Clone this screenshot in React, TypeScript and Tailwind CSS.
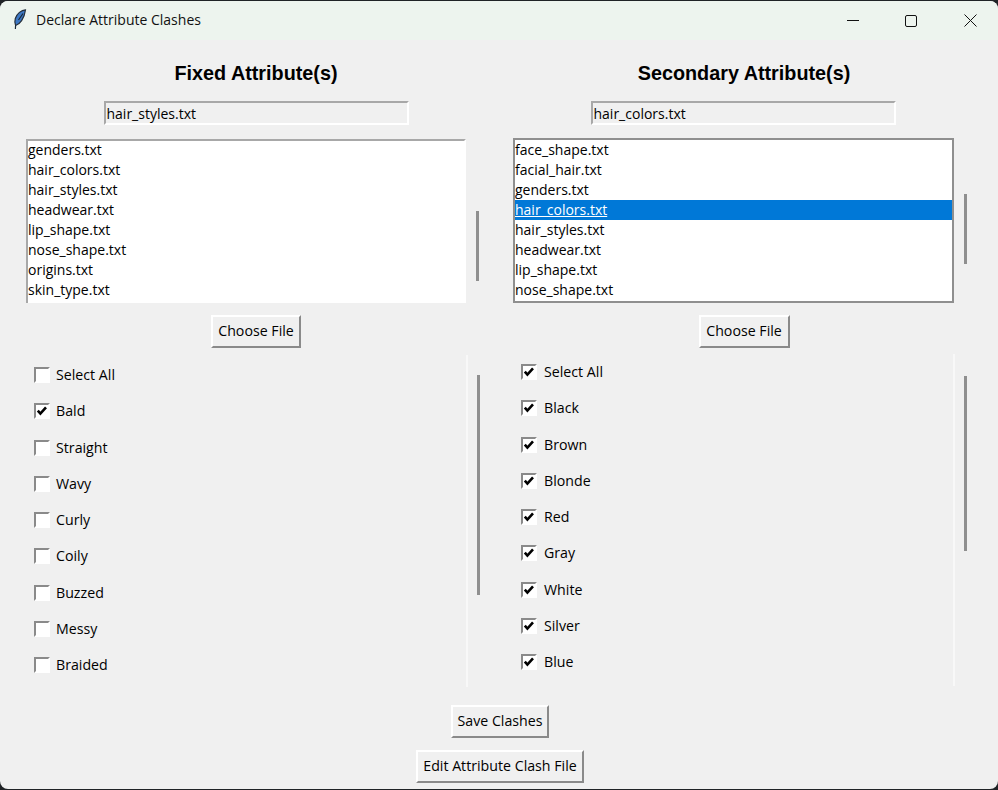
import React from "react";

const font = "[font-family:'Open_Sans','Noto_Sans',sans-serif]";

function Btn({ label, w }: { label: string; w: string }) {
  return (
    <div className={`${w} h-[33px] pb-[1px] flex items-center justify-center border-2 border-t-white border-l-white border-b-[#8a8a8a] border-r-[#8a8a8a] bg-[#f0f0f0] text-[14.2px] text-black leading-none`}>
      {label}
    </div>
  );
}

function Field({ value }: { value: string }) {
  return (
    <div className="w-[305px] h-[24px] flex items-center pl-[1px] pt-[2px] border-2 border-t-[#a8a8a8] border-l-[#a8a8a8] border-b-white border-r-white text-[14px] text-black leading-none">
      {value}
    </div>
  );
}

function Check({ label, checked, wide }: { label: string; checked: boolean; wide?: boolean }) {
  return (
    <div className="h-[36.25px] flex items-center">
      <span className="w-[16px] h-[16px] flex items-center justify-center bg-white border-2 border-t-[#8a8a8a] border-l-[#8a8a8a] border-b-white border-r-white">
        {checked && (
          <svg width="12" height="12" viewBox="0 0 12 12" fill="none">
            <path d="M1.8 5.6 L4.4 8.6 L10 2.4" stroke="#000" strokeWidth="2.6" />
          </svg>
        )}
      </span>
      <span className={`${wide ? "ml-[7px]" : "ml-[6px]"} text-[14.2px] text-black leading-none`}>{label}</span>
    </div>
  );
}

function Thumb({ cls }: { cls: string }) {
  return <div className={`w-[3px] bg-[#8f8f8f] ${cls}`} />;
}

function ListRow({ text, selected }: { text: string; selected?: boolean }) {
  return (
    <div className={`h-[20px] flex items-center text-[14px] leading-none ${selected ? "bg-[#0078d7] text-white underline" : "text-black"}`}>
      {text}
    </div>
  );
}

const leftFiles = ["genders.txt", "hair_colors.txt", "hair_styles.txt", "headwear.txt", "lip_shape.txt", "nose_shape.txt", "origins.txt", "skin_type.txt"];
const rightFiles = ["face_shape.txt", "facial_hair.txt", "genders.txt", "hair_colors.txt", "hair_styles.txt", "headwear.txt", "lip_shape.txt", "nose_shape.txt"];
const leftChecks: [string, boolean][] = [["Select All", false], ["Bald", true], ["Straight", false], ["Wavy", false], ["Curly", false], ["Coily", false], ["Buzzed", false], ["Messy", false], ["Braided", false]];
const rightChecks = ["Select All", "Black", "Brown", "Blonde", "Red", "Gray", "White", "Silver", "Blue"];

export default function App() {
  return (
    <div className={`w-[998px] h-[790px] bg-[#1f2326] overflow-hidden ${font}`}>
      <div className="h-[788px] mt-px rounded-t-[8px] rounded-b-[8px] overflow-hidden bg-[#f0f0f0] flex flex-col">
        {/* Title bar */}
        <div className="h-[39px] shrink-0 bg-[#edf4ee] flex items-center">
          <svg className="ml-[13px] mb-[2px]" width="14" height="21" viewBox="0 0 14 21">
            <path d="M12.5 0.8 C8.5 1 3.8 4.5 2.3 9.5 C1.6 12 1.8 14.5 2.6 16.5 C6.5 15.5 11.5 9.5 12.5 0.8 Z" fill="#3d78c4" stroke="#26303c" strokeWidth="1.2" />
            <path d="M10 4.5 L5.5 11 M2.6 16 L2.4 20" stroke="#182838" strokeWidth="1.2" fill="none" />
          </svg>
          <span className="ml-[9px] pb-[2px] text-[14px] text-[#111] leading-none">Declare Attribute Clashes</span>
          <div className="ml-auto flex items-center h-full">
            <div className="w-[58px] h-full flex items-center justify-center">
              <svg width="12" height="12" viewBox="0 0 12 12"><path d="M0 5.5 H12" stroke="#111" strokeWidth="1" /></svg>
            </div>
            <div className="w-[58px] h-full flex items-center justify-center">
              <svg width="12" height="12" viewBox="0 0 12 12" fill="none"><rect x="0.5" y="0.5" width="11" height="11" rx="1.5" stroke="#111" strokeWidth="1" /></svg>
            </div>
            <div className="w-[58px] h-full flex items-center justify-center">
              <svg className="ml-[2px]" width="13" height="13" viewBox="0 0 13 13" fill="none"><path d="M0.5 0.5 L12.5 12.5 M12.5 0.5 L0.5 12.5" stroke="#111" strokeWidth="1" /></svg>
            </div>
          </div>
        </div>

        {/* Columns */}
        <div className="flex">
          {/* Left */}
          <div className="w-[487px] pl-[26px] shrink-0">
            <div className="w-[460px] flex flex-col items-center">
              <div className="h-[61px] pt-[21px] text-[19.8px] font-bold leading-[24px] text-black [font-family:'Liberation_Sans',sans-serif]">Fixed Attribute(s)</div>
              <Field value="hair_styles.txt" />
            </div>
            <div className="mt-[14px] flex">
              <div className="w-[440px] h-[164px] bg-white border-t-2 border-l-2 border-t-[#a8a8a8] border-l-[#a8a8a8] border-r-2 border-r-white">
                <div className="-mt-px">
                  {leftFiles.map((f) => <ListRow key={f} text={f} />)}
                </div>
              </div>
              <Thumb cls="ml-[10px] mt-[72px] h-[70px]" />
            </div>
            <div className="mt-[12px] w-[460px] flex justify-center">
              <Btn label="Choose File" w="w-[90px]" />
            </div>
            <div className="mt-[7px] h-[332px] flex">
              <div className="w-[442px] border-r-2 border-r-[#f8f8f8] pl-[8px] pt-[2px]">
                {leftChecks.map(([l, c]) => <Check key={l} label={l} checked={c} />)}
              </div>
              <Thumb cls="ml-[9px] mt-[20px] h-[220px]" />
            </div>
          </div>
          {/* Right */}
          <div className="pl-[25px]">
            <div className="w-[464px] flex flex-col items-center">
              <div className="h-[61px] pt-[21px] text-[19.8px] font-bold leading-[24px] text-black [font-family:'Liberation_Sans',sans-serif]">Secondary Attribute(s)</div>
              <div className="mr-[2px]">
                <Field value="hair_colors.txt" />
              </div>
            </div>
            <div className="mt-[13px] flex">
              <div className="ml-px w-[441px] h-[165px] bg-white border-2 border-[#8f8f8f]">
                {rightFiles.map((f) => <ListRow key={f} text={f} selected={f === "hair_colors.txt"} />)}
              </div>
              <Thumb cls="ml-[10px] mt-[56px] h-[70px]" />
            </div>
            <div className="mt-[12px] w-[464px] flex justify-center">
              <Btn label="Choose File" w="w-[91px]" />
            </div>
            <div className="mt-[6px] h-[332px] flex">
              <div className="w-[443px] border-r-2 border-r-[#f8f8f8] pl-[9px]">
                {rightChecks.map((l) => <Check key={l} label={l} checked wide />)}
              </div>
              <Thumb cls="ml-[9px] mt-[22px] h-[175px]" />
            </div>
          </div>
        </div>

        {/* Bottom buttons */}
        <div className="mt-[18px] pl-[2px] flex flex-col items-center gap-[12px]">
          <Btn label="Save Clashes" w="w-[98px]" />
          <Btn label="Edit Attribute Clash File" w="w-[168px]" />
        </div>
      </div>
    </div>
  );
}
